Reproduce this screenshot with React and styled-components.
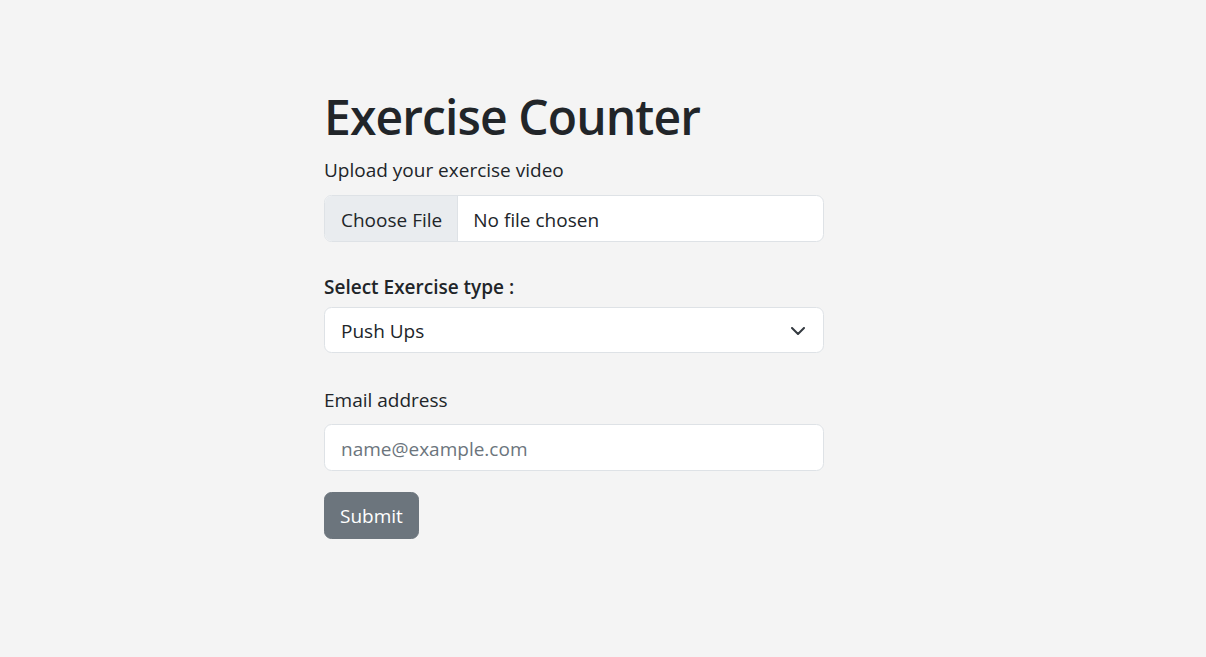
import React from 'react';
import styled, { createGlobalStyle } from 'styled-components';

const GlobalStyle = createGlobalStyle`
  html, body {
    margin: 0;
    padding: 0;
    background-color: #f4f4f4;
  }
  body {
    font-family: "Open Sans", "Noto Sans", sans-serif;
    font-size: 20px;
    line-height: 1.5;
    color: #212529;
  }
  * { box-sizing: border-box; }
`;

const S_Page = styled.div`
  min-height: 657px;
  padding-top: 87px;
  padding-left: 324px;`;

const S_Form = styled.form`
  width: 500px;
  display: flex;
  flex-direction: column;`;

const S_Title = styled.h1`
  margin: 0 0 8px 0;
  font-size: 48px;
  font-weight: 600;
  line-height: 60px;
  letter-spacing: -0.9px;
  color: #212529;`;

const S_Label = styled.label`
  display: block;
  font-size: 19px;
  line-height: 30px;
  font-weight: ${props => (props.bold ? 600 : 400)};
  margin-bottom: ${props => props.gap}px;`;

const S_Group = styled.div`
  margin-bottom: ${props => props.gap}px;`;

const S_FileBox = styled.div`
  display: flex;
  align-items: stretch;
  height: 47px;
  background-color: #fff;
  border: 1px solid #dee2e6;
  border-radius: 7.5px;
  overflow: hidden;
  font-size: 19px;`;

const S_FileButton = styled.span`
  display: flex;
  align-items: center;
  padding: 3px 15px 0 16px;
  background-color: #e9ecef;
  border-right: 1px solid #dee2e6;`;

const S_FileName = styled.span`
  display: flex;
  align-items: center;
  padding: 3px 0 0 15px;`;

const S_SelectWrap = styled.div`
  position: relative;
  height: 46px;`;

const S_Select = styled.select`
  appearance: none;
  width: 100%;
  height: 100%;
  padding: 2px 40px 0 16px;
  font-family: inherit;
  font-size: 19px;
  color: #212529;
  background-color: #fff;
  border: 1px solid #dee2e6;
  border-radius: 7.5px;
  outline: none;`;

const S_Chevron = styled.svg`
  position: absolute;
  right: 19px;
  top: 20px;
  width: 14px;
  height: 8px;
  pointer-events: none;`;

const S_Input = styled.input`
  display: block;
  width: 100%;
  height: 47px;
  padding: 2px 16px 0 16px;
  font-family: inherit;
  font-size: 19px;
  color: #212529;
  background-color: #fff;
  border: 1px solid #dee2e6;
  border-radius: 7.5px;
  outline: none;

  &::placeholder {
    color: #6c757d;
  }`;

const S_Button = styled.button`
  align-self: flex-start;
  height: 47px;
  padding: 0 15px;
  font-family: inherit;
  font-size: 19px;
  color: #fff;
  background-color: #6c757d;
  border: 1px solid #6c757d;
  border-radius: 7.5px;
  cursor: pointer;`;

const App = () => {
  return (
    <S_Page>
      <GlobalStyle />
      <S_Form onSubmit={e => e.preventDefault()}>
        <S_Title>Exercise Counter</S_Title>
        <S_Group gap={30}>
          <S_Label gap={10}>Upload your exercise video</S_Label>
          <S_FileBox>
            <S_FileButton>Choose File</S_FileButton>
            <S_FileName>No file chosen</S_FileName>
          </S_FileBox>
        </S_Group>
        <S_Group gap={32}>
          <S_Label bold gap={5}>Select Exercise type :</S_Label>
          <S_SelectWrap>
            <S_Select defaultValue="pushups">
              <option value="pushups">Push Ups</option>
              <option value="squats">Squats</option>
            </S_Select>
            <S_Chevron viewBox="0 0 14 8">
              <path d="M1 1l6 6 6-6" fill="none" stroke="#343a40" strokeWidth="2" strokeLinecap="round" strokeLinejoin="round" />
            </S_Chevron>
          </S_SelectWrap>
        </S_Group>
        <S_Group gap={21}>
          <S_Label gap={9}>Email address</S_Label>
          <S_Input type="email" placeholder="name@example.com" />
        </S_Group>
        <S_Button type="submit">Submit</S_Button>
      </S_Form>
    </S_Page>
  );
};

export default App;
